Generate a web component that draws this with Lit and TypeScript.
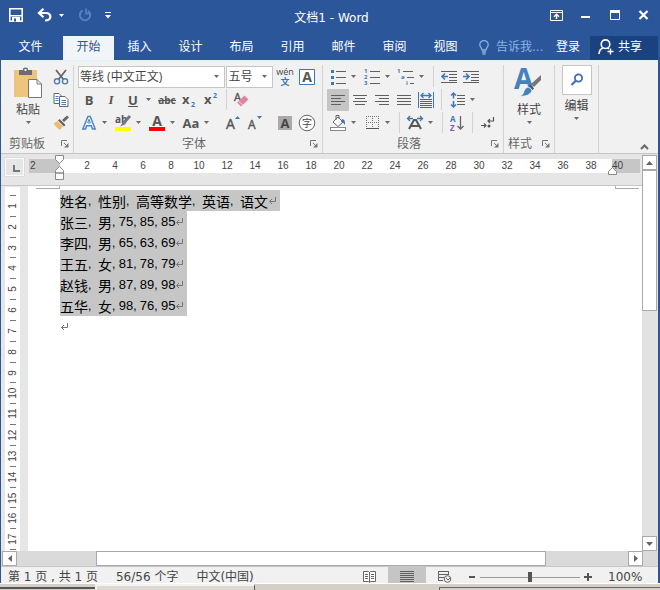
import { LitElement, html, svg, css, TemplateResult } from "lit";
import { customElement } from "lit/decorators.js";

const icon = (w: number, h: number, body: unknown): TemplateResult =>
  html`<svg width=${w} height=${h} viewBox="0 0 ${w} ${h}" aria-hidden="true">${body}</svg>`;

const lines = (rows: number[][], color = "#5f5f5f") =>
  rows.map(([x, y, w]) => svg`<rect x=${x} y=${y} width=${w} height="1" fill=${color} />`);

const caret = () => icon(5, 3, svg`<path d="M0 0h5L2.5 3z" fill="#6a6a6a"/>`);

const icons = {
  save: () => icon(14, 14, svg`<path d="M.8.8h12.4v12.4H.8z" fill="none" stroke="#fff" stroke-width="1.6"/><path d="M1 7h12v1.500H1z" fill="#fff"/><path d="M3 9h8v4.500H3z" fill="#fff"/><path d="M5 10.500h2v3H5z" fill="#2b579a"/>`),
  undo: () => icon(16, 14, svg`<path d="M2 5h7c6 0 6 7.500-1 7.500" fill="none" stroke="#fff" stroke-width="2.200"/><path d="M6.500 .8L2 5l4.500 4.200" fill="none" stroke="#fff" stroke-width="2.200"/>`),
  redo: () => icon(14, 14, svg`<path d="M4.500 2.500A5.200 5.200 0 1 0 10 2.800" fill="none" stroke="#5580bd" stroke-width="2"/><path d="M8 .5v5h5" fill="none" stroke="#5580bd" stroke-width="1.800"/>`),
  custom: () => icon(6, 7, svg`<path d="M0 0h6v1H0zM0 3h6L3 6.500z" fill="#fff"/>`),
  whiteCaret: () => icon(5, 3, svg`<path d="M0 0h5L2.500 3z" fill="#fff"/>`),
  ribbonOpts: () => icon(13, 11, svg`<path d="M.5.5h12v10H.5zM.5 2.500h12" fill="none" stroke="#fff"/><path d="M6.500 9V4.500M4 6.800L6.500 4.300 9 6.800" fill="none" stroke="#fff" stroke-width="1.400"/>`),
  min: () => icon(9, 10, svg`<path d="M0 6h9v2H0z" fill="#fff"/>`),
  max: () => icon(10, 10, svg`<path d="M.5.5h9v9h-9z" fill="none" stroke="#fff"/><path d="M0 0h10v3H0z" fill="#fff"/>`),
  close: () => icon(11, 10, svg`<path d="M1.500 1l8 8M9.500 1l-8 8" stroke="#fff" stroke-width="2.200"/>`),
  bulb: () => icon(10, 15, svg`<path d="M3 10c0-2-2.200-2.800-2.200-5.200a4.200 4.200 0 0 1 8.400 0C9.200 7.200 7 8 7 10zM3 12h4M3.500 14h3" fill="none" stroke="#8db1e2" stroke-width="1.300"/>`),
  share: () => icon(16, 16, svg`<circle cx="7.500" cy="5.200" r="4.300" fill="none" stroke="#fff" stroke-width="1.600"/><path d="M1 15c.3-3.500 2-5.500 4.500-6.200M9.500 8.800l1.500 1" fill="none" stroke="#fff" stroke-width="1.600"/><path d="M12.500 9.500v6M9.500 12.500h6" stroke="#fff" stroke-width="1.400"/>`),
  paste: () => icon(30, 32, svg`<rect x="1" y="3" width="23" height="27" fill="#edc57f"/><path d="M6 3h4V1.500Q12.500-.5 15 1.500V3h4v5H6z" fill="#6d6d6d"/><rect x="11.500" y="2" width="2" height="2" fill="#f1f1f1"/><path d="M15.500 12.500h8.500l4.500 4.500v13.500h-13z" fill="#fff" stroke="#777"/><path d="M24 12.500V17h4.500" fill="none" stroke="#777"/>`),
  cut: () => icon(16, 16, svg`<path d="M3 1l7.500 9.500M13 1L5.500 10.500" stroke="#666" stroke-width="1.800"/><circle cx="4" cy="12.300" r="2.600" fill="none" stroke="#4a7ebb" stroke-width="1.400"/><circle cx="12" cy="12.300" r="2.600" fill="none" stroke="#4a7ebb" stroke-width="1.400"/>`),
  copy: () => icon(16, 16, svg`<path d="M1 1.500h5l2.500 2.500v7.500H1z" fill="#fff" stroke="#666"/><path d="M2.500 4.500h3M2.500 6.500h3M2.500 8.500h3" stroke="#4a7ebb"/><path d="M6.500 4.500h5.500l3 3v7h-8.500z" fill="#fff" stroke="#666"/><path d="M8.500 8.500h4.500M8.500 10.500h4.500M8.500 12.500h4.500" stroke="#4a7ebb"/>`),
  brush: () => icon(16, 16, svg`<path d="M15 1.500L10 6" stroke="#666" stroke-width="3"/><path d="M6.500 4l6 6-1.500 1.500-6-6z" fill="#5f5f5f"/><path d="M4.500 6l5.500 5.500L7 15Q3 13 .5 8.500z" fill="#edbd70"/>`),
  outlineA: () => icon(16, 18, svg`<path d="M1.800 15L7 2.500h2.200L14.200 15h-2.700l-1.200-3.300H5.700L4.500 15z" fill="#fff" stroke="#4a86c5" stroke-width="1.500"/><path d="M6.600 9h2.800L8 5.200z" fill="#f1f1f1" stroke="#4a86c5"/>`),
  highlight: () => icon(18, 18, svg`<text x="1" y="9" font-size="10" font-weight="bold" fill="#555">ab</text><path d="M16 2L8.500 10" stroke="#777" stroke-width="3"/><path d="M9.500 7.500l2.500 2.500L6 12.500z" fill="#777"/><rect x="1" y="13" width="16" height="4" fill="#ff0"/>`),
  fontColor: () => icon(16, 18, svg`<text x="8" y="12" font-size="14" font-weight="bold" text-anchor="middle" fill="#555">A</text><rect y="13" width="16" height="4" fill="#f00"/>`),
  strike: () => icon(18, 16, svg`<text x="9" y="12" font-size="10" text-anchor="middle" font-weight="bold" fill="#555">abc</text><path d="M0 8.500h18" stroke="#555"/>`),
  sub: () => icon(16, 16, svg`<text x="1" y="12" font-size="13" font-weight="bold" fill="#555">x</text><text x="10" y="15" font-size="7" font-weight="bold" fill="#3c78b8">2</text>`),
  sup: () => icon(16, 16, svg`<text x="1" y="12" font-size="13" font-weight="bold" fill="#555">x</text><text x="10" y="6" font-size="7" font-weight="bold" fill="#3c78b8">2</text>`),
  eraser: () => icon(18, 17, svg`<text x="1" y="10" font-size="11" fill="#555" stroke="#555" stroke-width=".4">A</text><path d="M11.500 4.500L15.500 8.500 8 15.500 4 11.500z" fill="#e8819f"/><path d="M5.500 10l4 4" stroke="#f6d3dd"/>`),
  wen: () => icon(18, 20, svg`<text x="9" y="8" font-size="9" text-anchor="middle" fill="#444">wén</text><text x="9" y="18" font-size="9" font-weight="bold" text-anchor="middle" fill="#3c78b8">文</text>`),
  boxA: () => icon(16, 16, svg`<path d="M.5.5h15v15H.5z" fill="#fff" stroke="#3c78b8"/><text x="8" y="13" font-size="14" font-weight="bold" text-anchor="middle" fill="#555">A</text>`),
  grow: () => icon(16, 18, svg`<text x="1" y="15" font-size="14" fill="#555" stroke="#555" stroke-width=".4">A</text><path d="M10 5h5L12.500 2z" fill="#3c78b8"/>`),
  shrink: () => icon(16, 18, svg`<text x="1" y="15" font-size="12" fill="#555" stroke="#555" stroke-width=".4">A</text><path d="M10 2h5L12.500 5z" fill="#3c78b8"/>`),
  shadeA: () => icon(14, 14, svg`<rect width="14" height="14" fill="#aaa"/><text x="7" y="12" font-size="13" font-weight="bold" text-anchor="middle" fill="#444">A</text>`),
  circled: () => icon(18, 18, svg`<circle cx="9" cy="9" r="7.800" fill="#fff" stroke="#666"/><text x="9" y="13" font-size="10" text-anchor="middle" fill="#444">字</text>`),
  bullets: () => icon(16, 16, svg`<path d="M1 1h3v3H1zM1 7h3v3H1zM1 13h3v3H1z" fill="#3c78b8"/>${lines([[6, 2, 10], [6, 8, 10], [6, 14, 10]])}`),
  numbers: () => icon(16, 18, svg`<g font-size="6" font-weight="bold" fill="#3c78b8"><text y="5">1</text><text y="11">2</text><text y="17">3</text></g>${lines([[6, 3, 10], [6, 9, 10], [6, 15, 10]])}`),
  multi: () => icon(18, 18, svg`<g font-size="6" font-weight="bold" fill="#3c78b8"><text y="5">1</text><text x="4" y="11">a</text><text x="9" y="17">i</text></g>${lines([[6, 3, 10], [10, 9, 7], [13, 15, 4]])}`),
  outdent: () => icon(16, 14, svg`${lines([[0, 1, 16], [8, 4, 8], [8, 7, 8], [8, 10, 8], [0, 12, 16]])}<path d="M1 6.500h6M4 3.500l-3 3 3 3" fill="none" stroke="#3c78b8" stroke-width="1.600"/>`),
  indent: () => icon(16, 14, svg`${lines([[0, 1, 16], [8, 4, 8], [8, 7, 8], [8, 10, 8], [0, 12, 16]])}<path d="M0 6.500h6M3 3.500l3 3-3 3" fill="none" stroke="#3c78b8" stroke-width="1.600"/>`),
  left: () => icon(14, 12, lines([[0, 1, 14], [0, 4, 10], [0, 7, 14], [0, 10, 10]])),
  center: () => icon(14, 12, lines([[0, 1, 14], [2, 4, 10], [0, 7, 14], [2, 10, 10]])),
  right: () => icon(14, 12, lines([[0, 1, 14], [4, 4, 10], [0, 7, 14], [4, 10, 10]])),
  justify: () => icon(14, 12, lines([[0, 1, 14], [0, 4, 14], [0, 7, 14], [0, 10, 14]])),
  distribute: () => icon(16, 16, svg`<path d="M.5 0v16M15.500 0v16" stroke="#3c78b8"/><path d="M3 3.500h10M5.500 1L3 3.500 5.500 6M10.500 1L13 3.500 10.500 6" fill="none" stroke="#3c78b8" stroke-width="1.300"/>${lines([[2, 7, 12], [2, 9, 12], [2, 11, 12], [2, 13, 12], [2, 15, 12]])}`),
  spacing: () => icon(15, 16, svg`<path d="M3.500 1v5.500M1 3.500L3.500 1 6 3.500M3.500 9v6M1 12.500L3.500 15 6 12.500" fill="none" stroke="#3c78b8" stroke-width="1.500"/>${lines([[7, 3, 8], [7, 6, 8], [7, 9, 8], [7, 12, 8]])}`),
  bucket: () => icon(16, 17, svg`<path d="M3 8l5-5 5 5-5 4.500z" fill="#fff" stroke="#666"/><path d="M6 6V1.500h3V5" fill="none" stroke="#666"/><path d="M12 5q3.500 0 3 6-1.500-3-4-3z" fill="#3c78b8"/><rect x=".5" y="13.500" width="15" height="3" fill="#fff" stroke="#888"/>`),
  borders: () => icon(13, 13, svg`<path d="M.5 0v12M6.500 0v12M12.500 0v12M0 .5h13M0 6.500h13" stroke="#777" stroke-dasharray="1 1"/><path d="M0 12.500h13" stroke="#555"/>`),
  asian: () => icon(18, 16, svg`<path d="M3 14L8 5h2l5 9M5.500 11h7" fill="none" stroke="#555" stroke-width="2"/><path d="M7 3.500H1.500M4 1L1.500 3.500 4 6M11 3.500h5.500M14 1l2.500 2.500L14 6" fill="none" stroke="#3c78b8" stroke-width="1.300"/>`),
  sort: () => icon(14, 16, svg`<g font-size="8" font-weight="bold"><text y="7" fill="#3c78b8">A</text><text y="16" fill="#8a56a8">Z</text></g><path d="M10.500 1v13M7.500 11l3 3 3-3" fill="none" stroke="#666" stroke-width="1.300"/>`),
  marks: () => icon(14, 14, svg`<path d="M12.500 1v4H7M9 3L7 5l2 2M0 9.500h5M3 7.500l2 2-2 2" fill="none" stroke="#555" stroke-width="1.200"/><circle cx="8" cy="10" r="1.500" fill="#555"/>`),
  styles: () => icon(30, 32, svg`<text x="0" y="22" font-size="28" font-weight="bold" fill="#4382bd">A</text><path d="M27 8v5l-7 7-3-3z" fill="#777"/><path d="M16.500 18l3.500 3.500-1.500 1.500-3.500-3.500z" fill="#555"/><path d="M14 20q4 1 4 4-3 6-12 5 4-2 4-5 1-3 4-4z" fill="#4382bd" stroke="#f1f1f1" stroke-width=".8"/>`),
  find: () => icon(14, 14, svg`<circle cx="8.500" cy="5" r="3.600" fill="none" stroke="#3c6fb0" stroke-width="1.800"/><path d="M6 7.500L1.500 12" stroke="#3c6fb0" stroke-width="2.200"/>`),
  launcher: () => icon(8, 8, svg`<path d="M.5 6V.5H6M3 3l4 4" fill="none" stroke="#777"/><path d="M7.500 3v4.500H3z" fill="#777"/>`),
  collapse: () => icon(9, 6, svg`<path d="M1 5l3.500-3.500L8 5" fill="none" stroke="#666" stroke-width="2"/>`),
  returnMark: () => icon(8, 8, svg`<path d="M7.500 0v4.500H1.500M4 2L1.500 4.500 4 7" fill="none" stroke="#777"/>`),
  tabStop: () => icon(7, 7, svg`<path d="M1 0v6h6" fill="none" stroke="#777" stroke-width="2"/>`),
  indentMarks: () => icon(9, 26, svg`<path d="M.5.5h8v4L4.500 8.500.5 4.500zM4.500 11.500l4 4v2.500h-8v-2.500zM.5 18h8v6.500h-8z" fill="#fff" stroke="#888"/>`),
  rightMark: () => icon(9, 8, svg`<path d="M4.500.5l4 4v3h-8v-3z" fill="#fff" stroke="#888"/>`),
  up: () => icon(7, 4, svg`<path d="M0 4h7L3.500 0z" fill="#666"/>`),
  down: () => icon(7, 4, svg`<path d="M0 0h7L3.500 4z" fill="#666"/>`),
  back: () => icon(4, 7, svg`<path d="M4 0v7L0 3.500z" fill="#666"/>`),
  fwd: () => icon(4, 7, svg`<path d="M0 0v7l4-3.500z" fill="#666"/>`),
  minus: () => icon(8, 8, svg`<path d="M1 3h6v2H1z" fill="#555"/>`),
  plus: () => icon(8, 8, svg`<path d="M0 3h3V0h2v3h3v2H5v3H3V5H0z" fill="#555"/>`),
  read: () => icon(13, 12, svg`<path d="M.5.5h5l1 1 1-1h5v10h-5l-1 1-1-1h-5zM6.500 1v10" fill="#fff" stroke="#666"/><path d="M2 3.500h3M2 5.500h3M2 7.500h3M8 3.500h3M8 5.500h3M8 7.500h3" stroke="#666"/>`),
  print: () => icon(14, 12, lines([[0, 0, 14], [0, 2, 14], [0, 4, 14], [0, 6, 14], [0, 8, 14], [0, 10, 14]])),
  web: () => icon(14, 12, svg`${lines([[0, 0, 11], [0, 3, 11], [0, 6, 6], [0, 9, 5]])}<path d="M.5 0v10M10.500 0v4" stroke="#666"/><circle cx="9.500" cy="8" r="3.300" fill="#eee" stroke="#666"/><path d="M8 7l2 2 2-2" fill="none" stroke="#666"/>`),
};

type IconName = keyof typeof icons;

const records = [
  ["张三", "男", "75", "85", "85"],
  ["李四", "男", "65", "63", "69"],
  ["王五", "女", "81", "78", "79"],
  ["赵钱", "男", "87", "89", "98"],
  ["五华", "女", "98", "76", "95"],
];
const headings = ["姓名", "性别", "高等数学", "英语", "语文"];
const tabs = ["开始", "插入", "设计", "布局", "引用", "邮件", "审阅", "视图"];

@customElement("app-root")
export class AppRoot extends LitElement {
  static styles = css`
    :host {
      display: flex;
      flex-direction: column;
      height: 100vh;
      overflow: hidden;
      font: 12px "DejaVu Sans", "Noto Sans CJK SC", sans-serif;
      color: #444;
      background: #f1f1f1;
    }
    * { box-sizing: border-box; }
    svg { display: block; flex: none; overflow: visible; font-family: "Open Sans", "Noto Sans CJK SC", sans-serif; }
    button {
      display: flex;
      align-items: center;
      justify-content: center;
      flex: none;
      margin: 0;
      padding: 0;
      border: 0;
      background: none;
      font: inherit;
      color: inherit;
      white-space: nowrap;
    }
    .titlebar { display: flex; flex: none; height: 36px; padding-right: 4px; background: #2b579a; color: #fff; }
    .side { display: flex; flex: 1; height: 30px; align-items: center; padding-left: 5px; }
    .side button { width: 22px; height: 24px; }
    .side .save { margin-right: 7px; }
    .side .slim { width: 10px; }
    .side .redo { margin: 0 1px 0 8px; }
    .side.end { justify-content: flex-end; padding: 0; margin-right: -2px; }
    .side.end button { width: 29px; }
    .title { margin: 0; font-size: 12px; font-weight: 400; line-height: 36px; }
    .tabs { display: flex; flex: none; height: 24px; background: #2b579a; color: #fff; }
    .tabs button { width: 51px; line-height: 22px; padding-bottom: 2px; }
    .tabs .file { width: 61px; margin-right: 2px; }
    .tabs .selected { background: #f1f5f9; color: #2b579a; }
    .tabs .tell { flex: 1; width: auto; justify-content: flex-start; gap: 7px; padding-left: 8px; color: #8db1e2; }
    .tabs .login { width: 44px; }
    .tabs .share { width: 68px; gap: 4px; padding-right: 8px; background: #1b4280; margin-right: 2px; }
    .frame {
      display: flex;
      flex-direction: column;
      flex: 1;
      min-height: 0;
      border: solid #2b579a;
      border-width: 0 2px 0 1px;
    }
    .ribbon { display: flex; flex: none; height: 94px; padding-top: 3px; border-top: 2px solid #e8f1f9; border-bottom: 1px solid #c6c6c6; background: #f1f1f1; }
    .group { display: flex; flex-direction: column; flex: none; height: 88px; padding: 0 4px; border-right: 1px solid #d2d2d2; }
    .clip { width: 73px; }
    .font { width: 249px; }
    .para { width: 181px; }
    .style { width: 51px; }
    .edit { width: 44px; }
    .rows { display: flex; flex-direction: column; height: 69px; }
    .row { display: flex; align-items: center; height: 23px; }
    .row button { width: 22px; height: 22px; }
    .row .drop { width: 12px; justify-content: flex-start; padding-left: 2px; }
    .row .active { background: #c5c5c5; }
    .sep { width: 1px; height: 21px; margin: 0 4px; background: #d2d2d2; }
    .row .glyph { font: bold 13px "Open Sans", sans-serif; color: #555; }
    .row .italic { font-style: italic; font-family: "Liberation Serif", serif; }
    .row .underline { text-decoration: underline; }
    .bar { display: flex; align-items: center; height: 19px; color: #666; }
    .bar span { flex: 1; text-align: center; line-height: 18px; }
    .clip .bar span, .style .bar span { text-align: left; }
    .clip .bar span { padding-left: 4px; }
    .pair { display: flex; }
    .big { flex-direction: column; width: 46px; height: 69px; gap: 4px; justify-content: flex-start; padding-top: 2px; line-height: 14px; }
    .style .big, .edit .big { width: 42px; }
    .edit .big { width: 35px; padding: 0; }
    .lens { display: grid; place-items: center; width: 30px; height: 30px; border: 1px solid #c6c6c6; background: #fff; }
    .col { display: flex; flex-direction: column; }
    .col button { width: 20px; height: 23px; }
    .combo { display: grid; align-items: center; height: 22px; background: #fff; border: 1px solid #c6c6c6; }
    .combo select, .combo svg { grid-area: 1 / 1; }
    .combo svg { justify-self: end; margin-right: 5px; pointer-events: none; }
    .combo select {
      appearance: none;
      width: 100%;
      height: 20px;
      padding: 0 0 0 1px;
      border: 0;
      outline: 0;
      background: none;
      color: #444;
      font: 12px "Open Sans", "Noto Sans CJK SC", sans-serif;
    }
    .family { width: 149px; }
    .size { width: 47px; margin: 0 1px; }
    .fold { margin: auto 9px 3px auto; }
    .work { display: flex; flex: 1; min-height: 0; background: #e6e6e6; }
    .desk { display: flex; flex-direction: column; flex: 1; min-width: 0; }
    .hrule { display: flex; flex: none; height: 32px; padding: 5px 2px 0 0; border-bottom: 1px solid #c6c6c6; font: 10px "Liberation Sans", sans-serif; line-height: 14px; }
    .stop { width: 19px; height: 18px; margin: -1px 5px 0 4px; border: 1px solid #fafafa; background: #e6e6e6; padding: 6px 0 0 7px; box-shadow: 0 0 1px #aaa; }
    .margin { position: relative; width: 31px; height: 14px; background: #c6c6c6; }
    .margin.near { padding-left: 1px; }
    .margin.far { width: 28px; }
    .ticks { display: flex; flex: 1; min-width: 0; height: 14px; overflow: hidden; padding-left: 13px; background: #fff; }
    .ticks span { flex: none; width: 28px; text-align: center; }
    .marker { position: absolute; top: -4px; right: -4px; }
    .far .marker { top: 8px; right: auto; left: -4px; }
    .canvas { display: flex; flex: 1; min-height: 0; }
    .vrule { display: flex; flex-direction: column; align-items: center; width: 15px; margin: 1px 8px 0 4px; padding: 8px 0 1px; background: #fff; font: 10px "Liberation Sans", sans-serif; overflow: hidden; }
    .unit { display: flex; flex-direction: column; align-items: center; flex: 1; min-height: 0; }
    .unit::before, .vrule::after { content: ""; width: 6px; height: 1px; background: #777; }
    .unit span { flex: 1; line-height: 14px; writing-mode: vertical-rl; transform: rotate(180deg); text-align: center; }
    .page { flex: 1; min-width: 0; background: #fff; padding: 0 3px 0 8px; overflow: hidden; }
    .corners { display: flex; justify-content: space-between; }
    .corners i { width: 24px; height: 3px; border: solid #aaa; border-width: 0 1px 1px 0; }
    .corners i + i { border-width: 0 0 1px 1px; }
    .text { padding: 1px 0 0 24px; font: 14px "Noto Sans CJK SC", sans-serif; color: #000; }
    .text p { display: flex; align-items: center; width: max-content; height: 21px; margin: 0; padding-right: 4px; line-height: 20px; white-space: pre; }
    .text .marked { background: #c6c6c6; }
    .digits { font: 13px "Liberation Sans", sans-serif; line-height: 20px; }
    .comma { font: 12px "Liberation Sans", sans-serif; line-height: 20px; }
    .vscroll { display: flex; flex-direction: column; flex: none; width: 16px; padding-top: 1px; background: #e2e2e2; }
    .vscroll button, .hscroll button { width: 15px; height: 15px; border: 1px solid #aaa; background: #fff; }
    .vthumb { height: 141px; width: 15px; margin-bottom: auto; border: 1px solid #aaa; background: #fff; }
    .hscroll { display: flex; flex: none; height: 16px; padding: 0 15px 0 1px; background: #dadada; border-bottom: 1px solid #c6c6c6; }
    .htrack { display: flex; flex: 1; padding: 0 82px 0 79px; }
    .hthumb { flex: 1; border: 1px solid #aaa; background: #fff; }
    .status { display: flex; flex: none; height: 16px; overflow: hidden; padding-left: 7px; line-height: 21px; background: #f1f1f1; }
    .status span { margin-right: 18px; white-space: pre; }
    .status .grow { flex: 1; margin: 0; }
    .status button { width: 38px; height: 16px; padding-top: 3px; }
    .status .active { background: #c5c5c5; }
    .status .zoomstep { width: 16px; height: 20px; padding: 0; }
    .zoom { appearance: none; width: 100px; height: 20px; margin: 0; background: linear-gradient(#999, #999) center / 100% 1px no-repeat; }
    .zoom::-webkit-slider-thumb { appearance: none; width: 4px; height: 10px; background: #555; }
    .status .percent { width: 32px; margin: 0 18px 0 12px; }
    .taskbar { display: flex; flex: none; height: 7px; border-top: 1px solid #fff; background: #d4d0c8; }
    .task { width: 160px; border: solid #f4f2ee; border-width: 2px 0 0 2px; background: #dcd8d2; border-right: 1px solid #555; }
    .task.first { width: 95px; border: 0; border-top: 3px solid #d4d0c8; background: #555; height: 5px; }
    .tray { flex: 1; margin: 3px 0 0 184px; border: solid #666; border-width: 1px 0 0 1px; }
  `;

  private tool(name: IconName, label: string, cls = "") {
    return html`<button class=${cls} aria-label=${label}>${icons[name]()}</button>`;
  }

  private drop(label: string) {
    return html`<button class="drop" aria-label=${label}>${caret()}</button>`;
  }

  private bar(name: string) {
    return html`<div class="bar"><span>${name}</span>${this.tool("launcher", name + "设置")}</div>`;
  }

  private line(cells: string[]) {
    const isNumber = (s = "") => /\d/.test(s);
    const parts = cells.map((cell, i) => {
      const next = cells[i + 1];
      const gap = next === undefined ? "" : isNumber(next) ? ", " : ",  ";
      return html`<span class=${isNumber(cell) ? "digits" : ""}>${cell}</span><span class="comma">${gap}</span>`;
    });
    return html`<p class="marked">${parts}${icons.returnMark()}</p>`;
  }

  private ribbon() {
    const sep = html`<i class="sep"></i>`;
    return html`<div class="ribbon">
      <section class="group clip">
        <div class="rows"><div class="pair">
          <button class="big">${icons.paste()}<span>粘贴</span>${caret()}</button>
          <div class="col">${this.tool("cut", "剪切")}${this.tool("copy", "复制")}${this.tool("brush", "格式刷")}</div>
        </div></div>
        ${this.bar("剪贴板")}
      </section>
      <section class="group font">
        <div class="rows">
          <div class="row">
            <label class="combo family"><select aria-label="字体"><option>等线 (中文正文)</option></select>${caret()}</label>
            <label class="combo size"><select aria-label="字号"><option>五号</option></select>${caret()}</label>
            ${this.tool("wen", "拼音指南")}${this.tool("boxA", "字符边框")}
          </div>
          <div class="row">
            <button class="glyph">B</button><button class="glyph italic">I</button><button class="glyph underline">U</button>${this.drop("下划线")}
            ${this.tool("strike", "删除线")}${this.tool("sub", "下标")}${this.tool("sup", "上标")}${sep}${this.tool("eraser", "清除格式")}
          </div>
          <div class="row">
            ${this.tool("outlineA", "文本效果")}${this.drop("文本效果选项")}${this.tool("highlight", "突出显示")}${this.drop("突出显示颜色")}
            ${this.tool("fontColor", "字体颜色")}${this.drop("字体颜色选项")}<button class="glyph">Aa</button>${this.drop("更改大小写")}
            ${sep}${this.tool("grow", "增大字号")}${this.tool("shrink", "减小字号")}${sep}${this.tool("shadeA", "字符底纹")}${this.tool("circled", "带圈字符")}
          </div>
        </div>
        ${this.bar("字体")}
      </section>
      <section class="group para">
        <div class="rows">
          <div class="row">
            ${this.tool("bullets", "项目符号")}${this.drop("项目符号库")}${this.tool("numbers", "编号")}${this.drop("编号库")}
            ${this.tool("multi", "多级列表")}${this.drop("列表库")}${sep}${this.tool("outdent", "减少缩进量")}${this.tool("indent", "增加缩进量")}
          </div>
          <div class="row">
            ${this.tool("left", "左对齐", "active")}${this.tool("center", "居中")}${this.tool("right", "右对齐")}${this.tool("justify", "两端对齐")}
            ${this.tool("distribute", "分散对齐")}${sep}${this.tool("spacing", "行距")}${this.drop("行距选项")}
          </div>
          <div class="row">
            ${this.tool("bucket", "底纹")}${this.drop("底纹颜色")}${this.tool("borders", "边框")}${this.drop("边框选项")}
            ${sep}${this.tool("asian", "中文版式")}${this.drop("中文版式选项")}${sep}${this.tool("sort", "排序")}${sep}${this.tool("marks", "编辑标记")}
          </div>
        </div>
        ${this.bar("段落")}
      </section>
      <section class="group style">
        <div class="rows"><button class="big">${icons.styles()}<span>样式</span>${caret()}</button></div>
        ${this.bar("样式")}
      </section>
      <section class="group edit">
        <button class="big"><span class="lens">${icons.find()}</span><span>编辑</span>${caret()}</button>
      </section>
      ${this.tool("collapse", "折叠功能区", "fold")}
    </div>`;
  }

  render() {
    const evens = Array.from({ length: 19 }, (_, i) => (i + 1) * 2);
    const units = Array.from({ length: 17 }, (_, i) => i + 1);
    return html`
      <header class="titlebar">
        <div class="side">
          ${this.tool("save", "保存", "save")}${this.tool("undo", "撤消")}${this.tool("whiteCaret", "撤消列表", "slim")}
          ${this.tool("redo", "恢复", "redo")}${this.tool("custom", "自定义快速访问工具栏")}
        </div>
        <h1 class="title">文档1 - Word</h1>
        <div class="side end">
          ${this.tool("ribbonOpts", "功能区显示选项")}${this.tool("min", "最小化")}${this.tool("max", "最大化")}${this.tool("close", "关闭")}
        </div>
      </header>
      <nav class="tabs">
        <button class="file">文件</button>
        ${tabs.map((t, i) => html`<button class=${i === 0 ? "selected" : ""}>${t}</button>`)}
        <button class="tell">${icons.bulb()}告诉我...</button>
        <button class="login">登录</button>
        <button class="share">${icons.share()}共享</button>
      </nav>
      <div class="frame">
        ${this.ribbon()}
        <main class="work">
          <div class="desk">
            <div class="hrule">
              <div class="stop">${icons.tabStop()}</div>
              <div class="margin near">2<div class="marker">${icons.indentMarks()}</div></div>
              <div class="ticks">${evens.map((n) => html`<span>${n}</span>`)}</div>
              <div class="margin far">40<div class="marker">${icons.rightMark()}</div></div>
            </div>
            <div class="canvas">
              <div class="vrule">${units.map((n) => html`<div class="unit"><span>${n}</span></div>`)}</div>
              <article class="page">
                <div class="corners"><i></i><i></i></div>
                <div class="text">
                  ${this.line(headings)}${records.map((r) => this.line(r))}
                  <p>${icons.returnMark()}</p>
                </div>
              </article>
            </div>
          </div>
          <div class="vscroll">${this.tool("up", "向上滚动")}<div class="vthumb"></div>${this.tool("down", "向下滚动")}</div>
        </main>
        <div class="hscroll">${this.tool("back", "向左滚动")}<div class="htrack"><div class="hthumb"></div></div>${this.tool("fwd", "向右滚动")}</div>
        <footer class="status">
          <span>第 1 页 , 共 1 页</span><span>56/56 个字</span><span>中文(中国)</span><span class="grow"></span>
          ${this.tool("read", "阅读视图")}${this.tool("print", "页面视图", "active")}${this.tool("web", "Web 版式视图")}
          ${this.tool("minus", "缩小", "zoomstep")}
          <input class="zoom" type="range" min="0" max="200" value="100" aria-label="显示比例" />
          ${this.tool("plus", "放大", "zoomstep")}
          <span class="percent">100%</span>
        </footer>
      </div>
      <div class="taskbar"><div class="task first"></div><div class="task"></div><div class="tray"></div></div>
    `;
  }
}
